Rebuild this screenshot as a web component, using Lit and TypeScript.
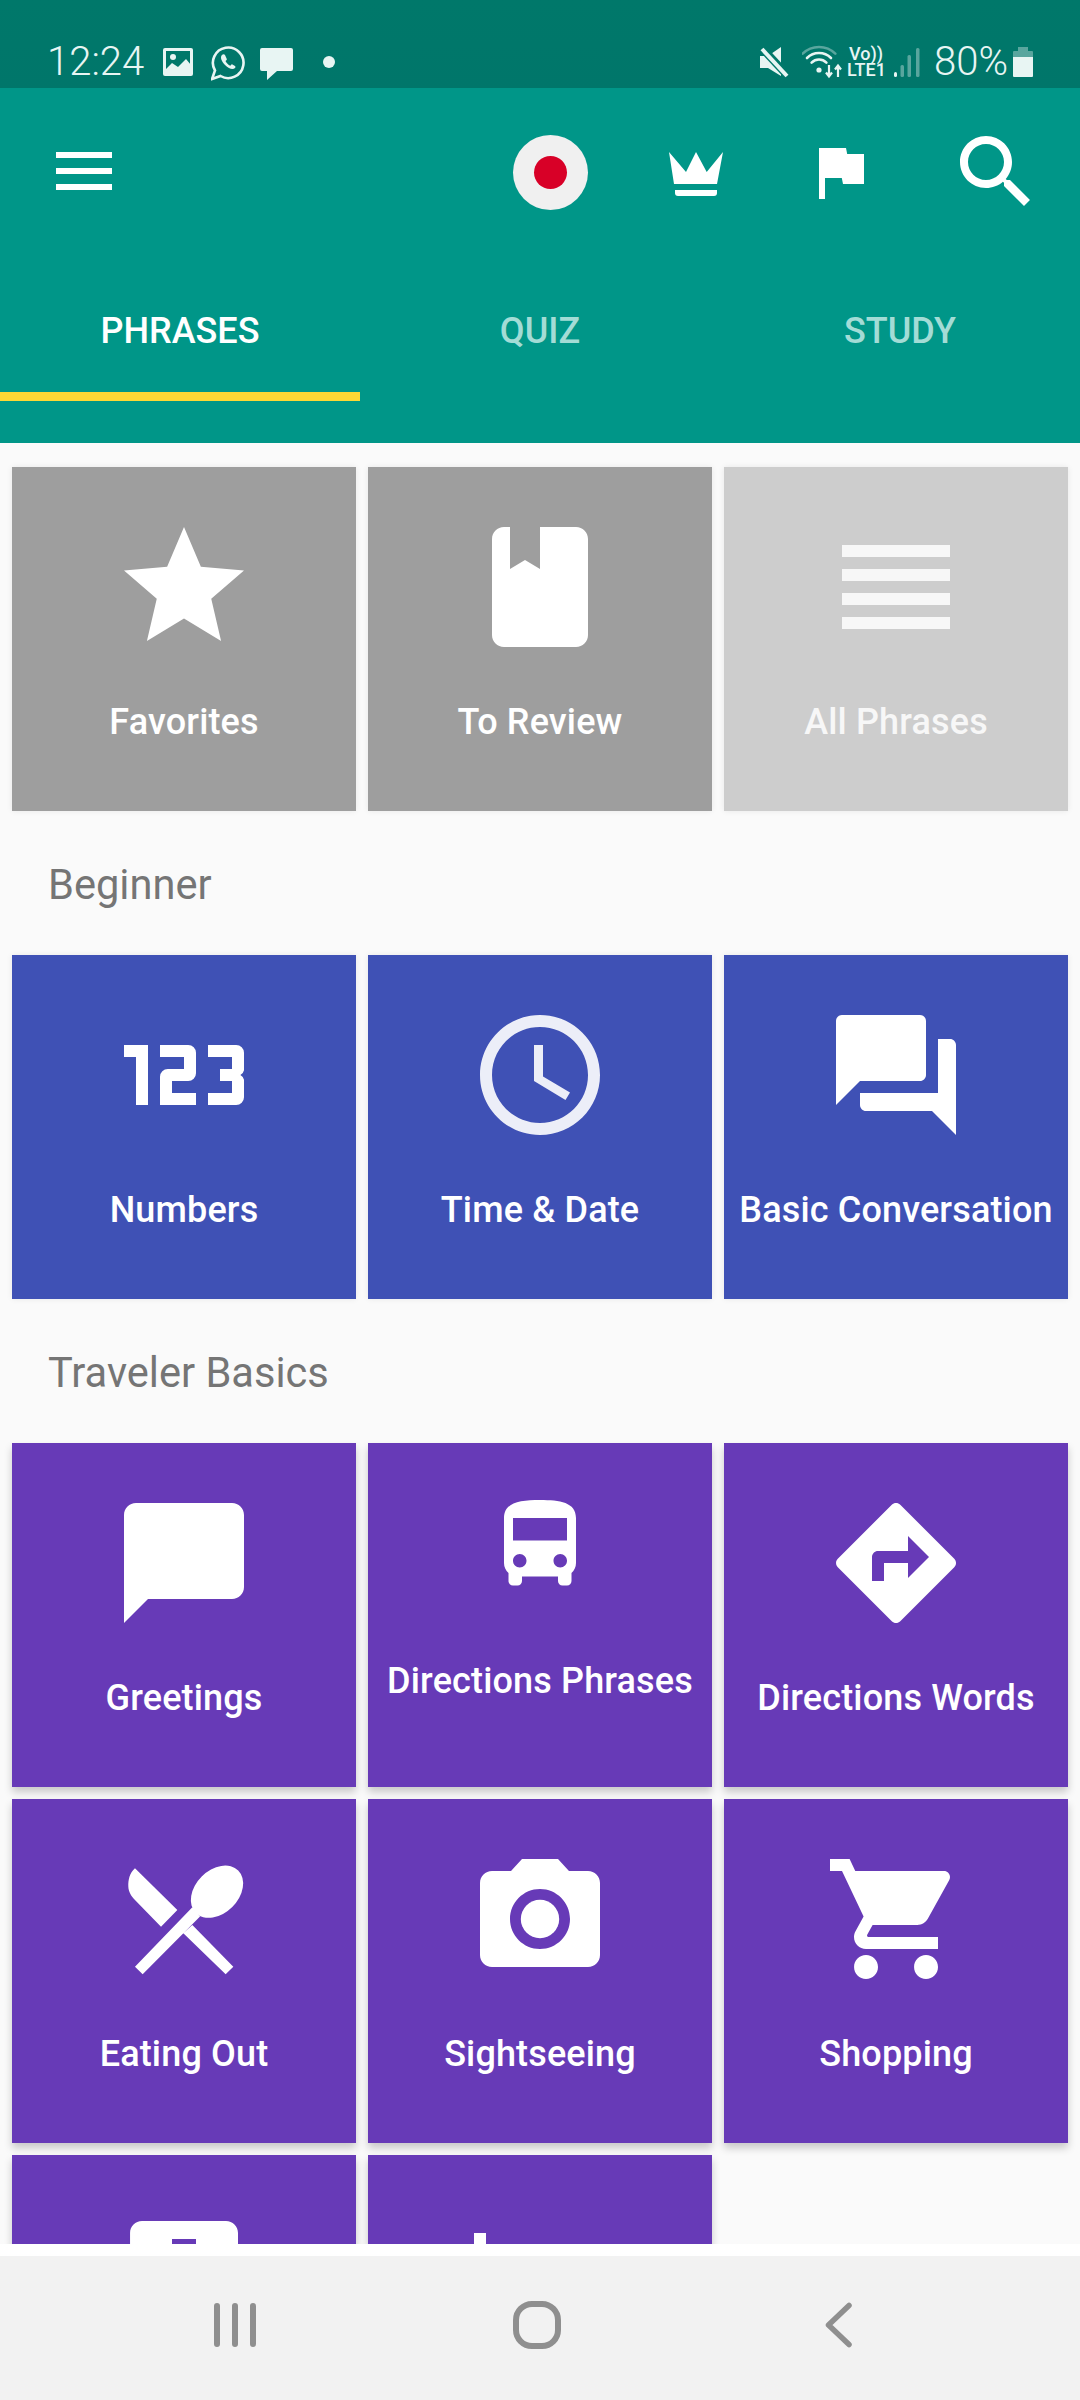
import { LitElement, html, css, svg } from 'lit';
import { customElement } from 'lit/decorators.js';

// material glyphs on a 24 unit box
const STAR = svg`<path d="M12 17.27L18.18 21l-1.64-7.03L22 9.24l-7.19-.61L12 2 9.19 8.63 2 9.24l5.46 4.73L5.82 21z" />`;
const BOOK = svg`<path d="M6 2c-1.1 0-2 .9-2 2v16c0 1.1.9 2 2 2h12c1.1 0 2-.9 2-2V4c0-1.1-.9-2-2-2h-6v7L9.5 7.5 7 9V2z" />`;
const LINES = svg`<path d="M3 5h18v2H3zM3 9h18v2H3zM3 13h18v2H3zM3 17h18v2H3z" />`;
const NUMBERS = svg`<path d="M2 7h4v10H4V9H2zM8 7h4.7A1.3 1.3 0 0114 8.3v3.4A1.3 1.3 0 0112.7 13H10v2h4v2H8v-4.700A1.3 1.3 0 019.3 11H12V9H8zM16 7h4.7A1.3 1.3 0 0122 8.3v2.900a1.2 1.2 0 01-.6.8 1.2 1.2 0 01.6.8v2.900a1.3 1.3 0 01-1.3 1.3H16v-2h4v-2h-2v-2h2V9h-4z" />`;
const CLOCK = svg`<path fill-opacity=".9" d="M11.99 2C6.47 2 2 6.48 2 12s4.47 10 9.99 10C17.52 22 22 17.52 22 12S17.52 2 11.99 2zM12 20c-4.42 0-8-3.58-8-8s3.58-8 8-8 8 3.58 8 8-3.58 8-8 8zm.5-13H11v6l5.25 3.15.75-1.23-4.5-2.67z" />`;
const CHATS = svg`<path d="M21 6h-2v9H6v2c0 .55.45 1 1 1h11l4 4V7c0-.55-.45-1-1-1zm-4 6V3c0-.55-.45-1-1-1H3c-.55 0-1 .45-1 1v14l4-4h10c.55 0 1-.45 1-1z" />`;
const BUBBLE = svg`<path d="M20 2H4c-1.1 0-2 .9-2 2v18l4-4h14c1.1 0 2-.9 2-2V4c0-1.1-.9-2-2-2z" />`;
const BUS = svg`<path d="M4 16c0 .88.39 1.67 1 2.22V20c0 .55.45 1 1 1h1c.55 0 1-.45 1-1v-1h8v1c0 .55.45 1 1 1h1c.55 0 1-.45 1-1v-1.78c.61-.55 1-1.34 1-2.22V6c0-3.5-3.58-4-8-4s-8 .5-8 4v10zm3.5 1c-.83 0-1.5-.67-1.5-1.5S6.67 14 7.5 14s1.5.67 1.5 1.5S8.33 17 7.5 17zm9 0c-.83 0-1.5-.67-1.5-1.5s.67-1.5 1.5-1.5 1.5.67 1.5 1.5-.67 1.5-1.5 1.5zm1.5-6H6V6h12v5z" />`;
const TURN = svg`<path d="M21.71 11.29l-9-9c-.39-.39-1.02-.39-1.41 0l-9 9c-.39.39-.39 1.02 0 1.41l9 9c.39.39 1.02.39 1.41 0l9-9c.39-.38.39-1.01 0-1.41zM14 14.5V12h-4v3H8v-4c0-.55.45-1 1-1h5V7.5l3.5 3.5-3.5 3.5z" />`;
const CUTLERY = svg`
  <path d="M3.83 3.56C2.9 4.4 2.7 5.5 2.72 6.6c.03.9.48 1.6 1.11 2.23l4.34 4.45 2.72-2.78zM11.89 14.39L18.94 21.2l1.28-1.26L13.39 13zM3.83 19.94L5.11 21.2l9.56-9.6-1.28-1.54z" />
  <ellipse cx="17.5" cy="7.45" rx="5" ry="3.6" transform="rotate(-45 17.5 7.45)" />`;
const CAMERA = svg`<circle cx="12" cy="12" r="3.2" /><path d="M9 2L7.17 4H4c-1.1 0-2 .9-2 2v12c0 1.1.9 2 2 2h16c1.1 0 2-.9 2-2V6c0-1.1-.9-2-2-2h-3.17L15 2H9zm3 15c-2.76 0-5-2.24-5-5s2.24-5 5-5 5 2.24 5 5-2.24 5-5 5z" />`;
const CART = svg`<path d="M7 18c-1.1 0-1.99.9-1.99 2S5.9 22 7 22s2-.9 2-2-.9-2-2-2zM1 2v2h2l3.6 7.59-1.35 2.45c-.16.28-.25.61-.25.96 0 1.1.9 2 2 2h12v-2H7.42c-.14 0-.25-.11-.25-.25l.03-.12.9-1.63h7.45c.75 0 1.41-.41 1.75-1.03l3.58-6.49c.08-.14.12-.31.12-.48 0-.55-.45-1-1-1H5.21l-.94-2H1zm16 16c-1.1 0-1.99.9-1.99 2s.89 2 1.99 2 2-.9 2-2-.9-2-2-2z" />`;
const HOSPITAL = svg`<path d="M19 3H5c-1.1 0-1.99.9-1.99 2L3 19c0 1.1.9 2 2 2h14c1.1 0 2-.9 2-2V5c0-1.1-.9-2-2-2zm-1 11h-4v4h-4v-4H6v-4h4V6h4v4h4v4z" />`;
const HOTEL = svg`<path d="M7 13c1.66 0 3-1.34 3-3S8.66 7 7 7s-3 1.34-3 3 1.34 3 3 3zm12-6h-8v7H3V5H1v15h2v-3h18v3h2v-9c0-2.21-1.79-4-4-4z" />`;

interface Tile {
  label: string;
  icon: unknown;
  small?: boolean;
  faded?: boolean;
}

const BASICS: Tile[] = [
  { label: 'Favorites', icon: STAR },
  { label: 'To Review', icon: BOOK },
  { label: 'All Phrases', icon: LINES, faded: true },
];
const BEGINNER: Tile[] = [
  { label: 'Numbers', icon: NUMBERS },
  { label: 'Time & Date', icon: CLOCK },
  { label: 'Basic Conversation', icon: CHATS },
];
const TRAVELER: Tile[] = [
  { label: 'Greetings', icon: BUBBLE },
  { label: 'Directions Phrases', icon: BUS, small: true },
  { label: 'Directions Words', icon: TURN },
  { label: 'Eating Out', icon: CUTLERY },
  { label: 'Sightseeing', icon: CAMERA },
  { label: 'Shopping', icon: CART },
  { label: '', icon: HOSPITAL },
  { label: '', icon: HOTEL },
];

@customElement('app-root')
export class AppRoot extends LitElement {
  static styles = css`
    :host {
      display: flex;
      flex-direction: column;
      width: 1080px;
      height: 2400px;
      overflow: hidden;
      background: #fff;
      font-family: Roboto, 'Noto Sans', sans-serif;
    }

    svg {
      display: block;
      flex: none;
      fill: currentColor;
    }

    .status {
      display: flex;
      align-items: center;
      flex: none;
      box-sizing: border-box;
      height: 88px;
      padding: 40px 47px 4px 47px;
      background: linear-gradient(#00786a, #00766a);
      color: #e8f5f3;
    }

    .time {
      width: 98px;
      font-size: 40px;
      font-weight: 300;
      line-height: 44px;
      white-space: nowrap;
    }

    .pct {
      width: 72px;
      margin-left: 14px;
      font-size: 40px;
      font-weight: 300;
      line-height: 44px;
      white-space: nowrap;
    }

    .volte {
      width: 38px;
      margin: 0 9px 0 5px;
      font-size: 18px;
      font-weight: 500;
      line-height: 16px;
      text-align: center;
      white-space: nowrap;
    }

    .photo,
    .whatsapp {
      margin-left: 18px;
    }

    .message {
      margin-left: 15px;
    }

    .dot {
      margin-left: 30px;
    }

    .wifi {
      margin-left: 13px;
    }

    .battery {
      margin-left: 7px;
    }

    .right {
      display: flex;
      align-items: center;
      margin-left: auto;
    }

    .bar {
      flex: none;
      background: #009688;
      color: #fff;
    }

    .toolbar {
      display: flex;
      align-items: center;
      height: 168px;
      padding: 0 36px 0 56px;
    }

    .menu {
      margin-bottom: 2px;
    }

    .actions {
      display: flex;
      align-items: center;
      margin-left: auto;
    }

    .lang {
      display: flex;
      align-items: center;
      justify-content: center;
      width: 75px;
      height: 75px;
      margin-right: 81px;
      border-radius: 50%;
      background: #f0f0f0;
    }

    .lang span {
      width: 33px;
      height: 33px;
      border-radius: 50%;
      background: #d80027;
    }

    .crown {
      margin-top: 4px;
    }

    .flag {
      margin-left: 81px;
    }

    .search {
      margin-left: 72px;
    }

    .tabs {
      display: grid;
      grid-template-columns: repeat(3, 360px);
      padding-bottom: 42px;
    }

    .tab {
      box-sizing: border-box;
      height: 145px;
      padding-top: 14px;
      border-bottom: 9px solid transparent;
      display: flex;
      align-items: center;
      justify-content: center;
      font-size: 36px;
      font-weight: 500;
      color: #a3dcd6;
    }

    .tab.active {
      border-bottom-color: #fdd835;
      color: #fff;
    }

    .scroll {
      flex: 1;
      min-height: 0;
      overflow: hidden;
      padding-top: 24px;
      background: #fafafa;
    }

    .grid {
      display: grid;
      grid-template-columns: repeat(3, 344px);
      gap: 12px;
      padding: 0 12px;
    }

    .heading {
      display: flex;
      align-items: center;
      box-sizing: border-box;
      height: 144px;
      padding: 2px 0 0 48px;
      font-size: 41.6px;
      color: #757575;
    }

    .tile {
      display: flex;
      flex-direction: column;
      align-items: center;
      box-sizing: border-box;
      height: 344px;
      padding-top: 48px;
      color: #fff;
      white-space: nowrap;
      font-size: 36px;
      font-weight: 500;
      letter-spacing: 0.15px;
      line-height: 42px;
      box-shadow: 0 0 6px rgba(0, 0, 0, 0.08);
    }

    .tile svg {
      width: 144px;
      height: 144px;
      margin-bottom: 42px;
    }

    .tile.small svg {
      width: 108px;
      height: 108px;
      margin-bottom: 61px;
    }

    .grey .tile {
      background: #9e9e9e;
    }

    .grey .tile.faded {
      background: #cdcdcd;
      color: #f7f7f7;
    }

    .indigo .tile {
      background: #3f51b5;
    }

    .purple .tile {
      background: #673ab7;
      box-shadow: 0 5px 8px rgba(0, 0, 0, 0.2);
    }

    .gap {
      flex: none;
      height: 12px;
      background: #fff;
    }

    .nav {
      display: grid;
      flex: none;
      grid-template-columns: repeat(3, 302px);
      justify-content: center;
      align-items: center;
      box-sizing: border-box;
      height: 144px;
      padding: 0 6px 6px 0;
      background: #f2f2f2;
      color: #8f8f8f;
    }

    .nav svg {
      justify-self: center;
      fill: none;
      stroke: currentColor;
    }
  `;

  private renderTiles(tiles: Tile[], tone: string) {
    return html`
      <div class="grid ${tone}">
        ${tiles.map(
          (t) => html`
            <div class="tile ${t.small ? 'small' : ''} ${t.faded ? 'faded' : ''}">
              <svg viewBox="0 0 24 24">${t.icon}</svg>
              ${t.label}
            </div>
          `
        )}
      </div>
    `;
  }

  private renderStatus() {
    const dim = 'rgba(255,255,255,.35)';
    return html`
      <div class="status">
        <span class="time">12:24</span>
        <svg class="photo" width="30" height="44" viewBox="0 40 30 44">
          <rect y="48" width="30" height="28" rx="2" />
          <rect x="3" y="51" width="24" height="19" fill="#00786a" />
          <circle cx="10" cy="57" r="3" />
          <path d="M2 70l7-7 6 4 8-8 5 6v5z" />
        </svg>
        <svg class="whatsapp" width="34" height="44" viewBox="0 40 34 44">
          <path d="M1 79l3-8.5a15.3 15.3 0 115.5 5.5z" fill="none" stroke="currentColor" stroke-width="2.6" />
          <path d="M11 55c-2 2-1 6 3 10s8 5 10 3c.6-.7.6-1.6 0-2l-2.6-1.5c-.6-.3-1-.1-1.4.4l-.7.9c-2-1-3.8-2.8-4.8-4.8l.9-.8c.5-.4.6-.9.3-1.4L14 55c-.5-.8-2.2-.9-3 0z" />
        </svg>
        <svg class="message" width="33" height="44" viewBox="0 40 33 44">
          <path d="M2 48h29a2 2 0 012 2v19a2 2 0 01-2 2H17L7 80v-9H2a2 2 0 01-2-2V50a2 2 0 012-2z" />
        </svg>
        <svg class="dot" width="12" height="44" viewBox="0 40 12 44">
          <circle cx="6" cy="62" r="6" />
        </svg>
        <div class="right">
          <svg width="29" height="44" viewBox="0 40 29 44">
            <path d="M0 56h8l13-9v29L8 68H0z" />
            <path d="M2 48l25 27" stroke="#00786a" stroke-width="8" />
            <path d="M2 49l25 27" stroke="currentColor" stroke-width="4" />
          </svg>
          <svg class="wifi" width="40" height="44" viewBox="0 40 40 44">
            <g fill="none" stroke="currentColor" stroke-width="2.6" stroke-linecap="round">
              <path d="M.7 53.7A23 23 0 0133.3 53.7" stroke="${dim}" />
              <path d="M5 58a17 17 0 0124 0" />
              <path d="M9.6 62.6a10.5 10.5 0 0114.8 0" />
            </g>
            <circle cx="17" cy="70" r="2.6" />
            <path d="M27 65v11M24 72.5l3 4 3-4M36 77V66M33 69.5l3-4 3 4" fill="none" stroke="currentColor" stroke-width="2.2" />
          </svg>
          <div class="volte">Vo))<br />LTE1</div>
          <svg width="26" height="44" viewBox="0 40 26 44">
            <rect y="72" width="3" height="5" rx="1.5" />
            <rect x="6.5" y="65" width="3.5" height="12" rx="1.5" fill="${dim}" />
            <rect x="13.5" y="55" width="3.5" height="22" rx="1.5" fill="${dim}" />
            <rect x="22" y="48" width="3.5" height="29" rx="1.5" fill="${dim}" />
          </svg>
          <span class="pct">80%</span>
          <svg class="battery" width="20" height="44" viewBox="0 40 20 44">
            <path d="M5 47h10v4h4a1 1 0 011 1v5H0v-5a1 1 0 011-1h4z" fill="${dim}" />
            <path d="M0 57h20v19a1 1 0 01-1 1H1a1 1 0 01-1-1z" />
          </svg>
        </div>
      </div>
    `;
  }

  private renderBar() {
    return html`
      <div class="bar">
        <div class="toolbar">
          <svg class="menu" width="56" height="38" viewBox="0 0 56 38">
            <rect width="56" height="6" />
            <rect y="16" width="56" height="6" />
            <rect y="32" width="56" height="6" />
          </svg>
          <div class="actions">
            <div class="lang"><span></span></div>
            <svg class="crown" width="54" height="44" viewBox="0 0 54 44">
              <path d="M0 0l17 20L27 0l10.7 20L54 0l-6 32H5z" />
              <path d="M6 38h42v3a3 3 0 01-3 3H9a3 3 0 01-3-3z" />
            </svg>
            <svg class="flag" width="72" height="72" viewBox="0 0 24 24">
              <path d="M14.4 6L14 4H5v17h2v-7h5.6l.4 2h7V6z" />
            </svg>
            <svg class="search" width="96" height="96" viewBox="0 0 24 24">
              <path d="M15.5 14h-.79l-.28-.27C15.41 12.59 16 11.11 16 9.5 16 5.91 13.09 3 9.5 3S3 5.91 3 9.5 5.91 16 9.5 16c1.61 0 3.09-.59 4.23-1.57l.27.28v.79l5 4.99L20.49 19l-4.99-5zm-6 0C7.01 14 5 11.99 5 9.5S7.01 5 9.5 5 14 7.01 14 9.5 11.99 14 9.5 14z" />
            </svg>
          </div>
        </div>
        <div class="tabs">
          <div class="tab active">PHRASES</div>
          <div class="tab">QUIZ</div>
          <div class="tab">STUDY</div>
        </div>
      </div>
    `;
  }

  render() {
    return html`
      ${this.renderStatus()} ${this.renderBar()}
      <div class="scroll">
        ${this.renderTiles(BASICS, 'grey')}
        <div class="heading">Beginner</div>
        ${this.renderTiles(BEGINNER, 'indigo')}
        <div class="heading">Traveler Basics</div>
        ${this.renderTiles(TRAVELER, 'purple')}
      </div>
      <div class="gap"></div>
      <div class="nav">
        <svg width="42" height="44" viewBox="0 0 42 44" stroke-width="6" stroke-linecap="round">
          <path d="M3 3v38M21 3v38M39 3v38" />
        </svg>
        <svg width="48" height="48" viewBox="0 0 48 48" stroke-width="6">
          <rect x="3" y="3" width="42" height="42" rx="16" />
        </svg>
        <svg width="28" height="46" viewBox="0 0 28 46" stroke-width="5.5" stroke-linecap="round" stroke-linejoin="round">
          <path d="M24 3.5L3.5 23 24 42.5" />
        </svg>
      </div>
    `;
  }
}
